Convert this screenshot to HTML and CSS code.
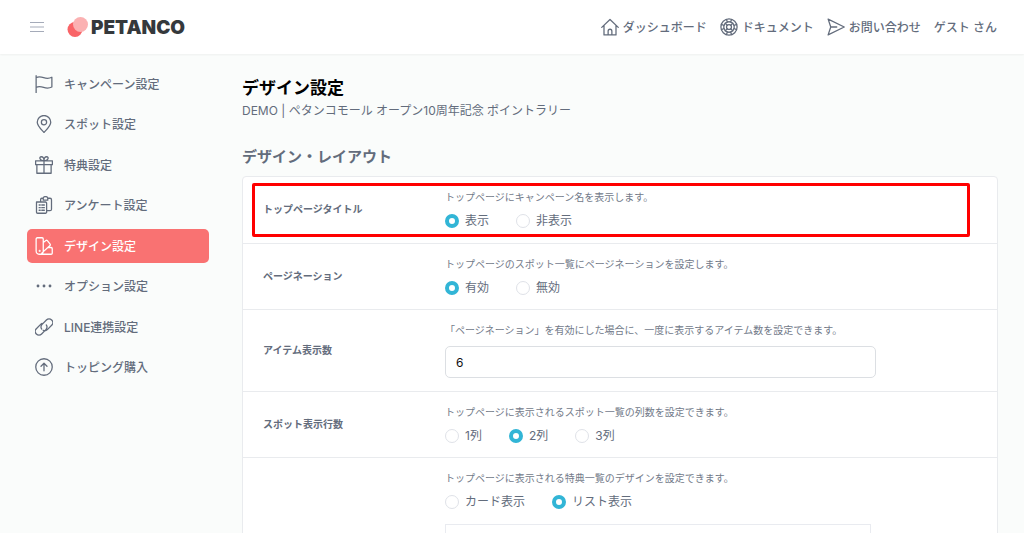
FILE: index.html
```html
<!DOCTYPE html>
<html lang="ja">
<head>
<meta charset="utf-8">
<meta name="viewport" content="width=device-width, initial-scale=1">
<title>デザイン設定 | PETANCO</title>
<link rel="stylesheet" href="styles.css">
</head>
<body>
<div class="app">
  <header class="topbar">
    <button class="menu-button" type="button" aria-label="メニュー">
      <svg class="menu-icon" viewBox="0 0 16 12"><path d="M1 1.500h14M1 6h14M1 10.500h14"/></svg>
    </button>
    <a class="logo" href="#">
      <svg class="logo-mark" viewBox="0 0 22 22"><circle cx="8" cy="13.500" r="7.500" fill="#f96467"/><circle cx="13.500" cy="8.500" r="7.500" fill="#fbb1b2"/></svg>
      <span class="logo-text">PETANCO</span>
    </a>
    <nav class="top-links" aria-label="ヘルプ">
      <a class="top-link" href="#"><svg class="icon" viewBox="0 0 24 24"><path d="M1 12.500 12 2l11 10.500M4 10v12.500h16V10M9.500 22.500v-5a2.500 2.500 0 0 1 5 0v5"/></svg><span>ダッシュボード</span></a>
      <a class="top-link" href="#"><svg class="icon" viewBox="0 0 24 24"><circle cx="12" cy="12" r="10.800"/><circle cx="12" cy="12" r="7"/><circle cx="12" cy="12" r="3.300"/><path d="m8.500 2 1.500 3.300M15.500 2 14 5.300M8.500 22l1.500-3.300M15.500 22 14 18.700M2 8.500 5.300 10M2 15.500 5.300 14M22 8.500 18.700 10M22 15.500 18.700 14M7 7l2.700 2.700M17 7l-2.700 2.700M7 17l2.700-2.700M17 17l-2.700-2.700"/></svg><span>ドキュメント</span></a>
      <a class="top-link" href="#"><svg class="icon" viewBox="0 0 24 24"><path d="M1.500 1.500 23 12 1.500 22.500 5 12zM5 12h8"/></svg><span>お問い合わせ</span></a>
      <a class="top-link" href="#"><span>ゲスト さん</span></a>
    </nav>
  </header>
  <div class="layout">
    <nav class="sidebar" aria-label="設定">
      <a class="side-link" href="#"><svg class="icon" viewBox="0 0 24 24"><path d="M1.500 1v22.500M1.500 3.500c4-2 7-1 10 0s7 1.500 11-.5v13c-4 2-8 1.500-11 .5s-6-2-10 0"/></svg><span>キャンペーン設定</span></a>
      <a class="side-link" href="#"><svg class="icon" viewBox="0 0 24 24"><path d="M12 23.300C8 19 3 14.500 3 9.700a9 9 0 0 1 18 0C21 14.500 16 19 12 23.300z"/><circle cx="12" cy="9.700" r="3.500"/></svg><span>スポット設定</span></a>
      <a class="side-link" href="#"><svg class="icon" viewBox="0 0 24 24"><path d="M.8 6.500h22.400v5H.8zM2.500 11.500V23h19V11.500M12 6.500V23M12 6.500C6 6.500 5 1 8.500 1 11 1 12 4 12 6.500zM12 6.500C18 6.500 19 1 15.500 1 13 1 12 4 12 6.500z"/></svg><span>特典設定</span></a>
      <a class="side-link" href="#"><svg class="icon" viewBox="0 0 24 24"><path d="M2.500 8h11.500a1.500 1.500 0 0 1 1.500 1.500V21.500A1.500 1.500 0 0 1 14 23H3.500A1.500 1.500 0 0 1 2 21.500V8zM7.500 8V4.500A1.500 1.500 0 0 1 9 3h2M17 3h3a2 2 0 0 1 2 2v12.500a2 2 0 0 1-2 2h-4.500M11 5.500V3c0-3 6-3 6 0v2.500zM5.500 12H7M9 12h3.500M5.500 15.500H7M9 15.500h3.500M5.500 19H7M9 19h3.500"/></svg><span>アンケート設定</span></a>
      <a class="side-link side-link-active" href="#" aria-current="page"><svg class="icon" viewBox="0 0 24 24"><path d="M1.500 2.500A1.500 1.500 0 0 1 3 1h6.500A1.500 1.500 0 0 1 11 2.500v16c0 6-9.500 6-9.500 0zM11 7.500l3.500-2.800a1.500 1.500 0 0 1 2 .2l3.700 4.500a1.500 1.500 0 0 1-.2 2L9 21.500M17.500 14h4a1.500 1.500 0 0 1 1.500 1.500v6a1.500 1.500 0 0 1-1.500 1.500H6"/><circle cx="6.200" cy="18.500" r=".5"/></svg><span>デザイン設定</span></a>
      <a class="side-link" href="#"><svg class="icon icon-dots" viewBox="0 0 24 24"><circle cx="4" cy="12" r="1.900"/><circle cx="12" cy="12" r="1.900"/><circle cx="20" cy="12" r="1.900"/></svg><span>オプション設定</span></a>
      <a class="side-link" href="#"><svg class="icon" viewBox="0 0 24 24"><path d="M9 14.800a5 5 0 0 1 .5-6.300l5.700-5.800a4.900 4.900 0 0 1 7 7l-5.700 5.800a5 5 0 0 1-5.500 1M15 9.200a5 5 0 0 1-.5 6.300l-5.700 5.800a4.900 4.900 0 0 1-7-7l5.700-5.800a5 5 0 0 1 2-1.200"/></svg><span>LINE連携設定</span></a>
      <a class="side-link" href="#"><svg class="icon" viewBox="0 0 24 24"><circle cx="12" cy="12" r="11"/><path d="M12 17V7.500M8 11l4-4 4 4"/></svg><span>トッピング購入</span></a>
    </nav>
    <main class="content">
      <h1 class="page-title">デザイン設定</h1>
      <p class="page-subtitle">DEMO | ペタンコモール オープン10周年記念 ポイントラリー</p>
      <h2 class="section-title">デザイン・レイアウト</h2>
      <form class="card">
        <div class="row row-marked" role="radiogroup" aria-labelledby="title-label">
          <div class="row-label" id="title-label">トップページタイトル</div>
          <div class="row-body">
            <p class="hint">トップページにキャンペーン名を表示します。</p>
            <div class="options">
              <label class="option"><input class="radio" type="radio" name="title" checked>表示</label>
              <label class="option"><input class="radio" type="radio" name="title">非表示</label>
            </div>
          </div>
        </div>
        <div class="row" role="radiogroup" aria-labelledby="paging-label">
          <div class="row-label" id="paging-label">ページネーション</div>
          <div class="row-body">
            <p class="hint">トップページのスポット一覧にページネーションを設定します。</p>
            <div class="options">
              <label class="option"><input class="radio" type="radio" name="paging" checked>有効</label>
              <label class="option"><input class="radio" type="radio" name="paging">無効</label>
            </div>
          </div>
        </div>
        <div class="row">
          <label class="row-label" for="item-count">アイテム表示数</label>
          <div class="row-body">
            <p class="hint">「ページネーション」を有効にした場合に、一度に表示するアイテム数を設定できます。</p>
            <input class="text-field" id="item-count" type="text" value="6">
          </div>
        </div>
        <div class="row" role="radiogroup" aria-labelledby="columns-label">
          <div class="row-label" id="columns-label">スポット表示行数</div>
          <div class="row-body">
            <p class="hint">トップページに表示されるスポット一覧の列数を設定できます。</p>
            <div class="options">
              <label class="option"><input class="radio" type="radio" name="columns">1列</label>
              <label class="option"><input class="radio" type="radio" name="columns" checked>2列</label>
              <label class="option"><input class="radio" type="radio" name="columns">3列</label>
            </div>
          </div>
        </div>
        <div class="row">
          <div class="row-label"></div>
          <div class="row-body">
            <p class="hint">トップページに表示される特典一覧のデザインを設定できます。</p>
            <div class="options">
              <label class="option"><input class="radio" type="radio" name="gift">カード表示</label>
              <label class="option"><input class="radio" type="radio" name="gift" checked>リスト表示</label>
            </div>
            <div class="preview"></div>
          </div>
        </div>
      </form>
    </main>
  </div>
</div>
</body>
</html>
```
FILE: styles.css
```css
* {
  box-sizing: border-box;
}

body {
  margin: 0;
  background: #fafcfb;
  color: #636c7c;
  font-family: Inter, "Noto Sans CJK JP", sans-serif;
  font-size: 12px;
  line-height: 16px;
}

a {
  color: inherit;
  text-decoration: none;
}

h1, h2, p {
  margin: 0;
}

.app {
  display: flex;
  flex-direction: column;
  height: 100vh;
  overflow: hidden;
}

.topbar {
  display: flex;
  flex: none;
  align-items: center;
  height: 54px;
  padding: 0 27px;
  background: #fff;
  box-shadow: 0 1px 2px #0000000d;
}

.menu-button {
  display: flex;
  width: 20px;
  padding: 2px;
  border: 0;
  background: none;
}

.menu-icon {
  width: 16px;
  height: 12px;
  stroke: #a5abb9;
  stroke-width: 1;
}

.logo {
  display: flex;
  align-items: center;
  gap: 2px;
  margin-left: 20px;
}

.logo-mark {
  width: 22px;
  height: 22px;
}

.logo-text {
  padding-top: 2px;
  color: #35393c;
  font-size: 19px;
  font-weight: 900;
}

.top-links {
  display: flex;
  gap: 13px;
  margin-left: auto;
}

.top-link {
  display: flex;
  align-items: center;
  gap: 4px;
  font-weight: 500;
  white-space: nowrap;
}

.top-link span,
.side-link span {
  padding-top: 2px;
}

.icon {
  flex: none;
  width: 18px;
  height: 18px;
  fill: none;
  stroke: currentColor;
  stroke-width: 1.700;
  stroke-linecap: round;
  stroke-linejoin: round;
}

.icon-dots {
  fill: currentColor;
  stroke: none;
}

.layout {
  display: grid;
  grid-template-columns: 182px 1fr;
  gap: 33px;
  align-items: start;
  padding: 0 26px 0 27px;
}

.sidebar {
  display: flex;
  flex-direction: column;
  justify-content: space-between;
  min-height: 317px;
  margin-top: 13px;
}

.side-link {
  display: flex;
  align-items: center;
  gap: 11px;
  height: 34px;
  padding: 0 8px;
  border-radius: 5px;
  font-weight: 500;
}

.side-link-active {
  background: #f97272;
  color: #fff;
}

.content {
  padding-top: 22px;
}

.page-title {
  color: #000;
  font-size: 17px;
  line-height: 24px;
}

.page-subtitle {
  margin-top: 3px;
}

.section-title {
  margin-top: 28px;
  font-size: 15px;
  line-height: 20px;
}

.card {
  margin-top: 9px;
  border: 1px solid #e9ebee;
  border-radius: 4px;
  background: #fff;
}

.row {
  display: grid;
  grid-template-columns: 182px 1fr;
  align-items: center;
  padding: 12px 20px 13px;
  border-bottom: 1px solid #e9ebee;
}

.row-marked {
  position: relative;
  padding-bottom: 14px;
}

.row-marked::after {
  content: "";
  position: absolute;
  inset: 6px 27px 6px 9px;
  border: 3px solid #f00;
  border-radius: 2px;
  pointer-events: none;
}

.row-label {
  font-size: 10px;
  font-weight: 700;
}

.hint {
  margin-bottom: 8px;
  color: #727a89;
  font-size: 10px;
}

.options {
  display: flex;
  gap: 27px;
}

.option {
  display: flex;
  align-items: center;
  gap: 6px;
}

.radio {
  appearance: none;
  width: 14px;
  height: 14px;
  margin: 0;
  border: 1px solid #dfe2e8;
  border-radius: 50%;
  background: #fff;
}

.radio:checked {
  border: 4px solid #32b5d6;
}

.text-field {
  display: block;
  width: 81%;
  height: 32px;
  padding: 0 10px;
  border: 1px solid #dcdfe3;
  border-radius: 5px;
  background: #fff;
  color: #111;
  font: inherit;
}

.preview {
  width: 80%;
  height: 200px;
  margin-top: 14px;
  border: 1px solid #e9ebf0;
}
```
